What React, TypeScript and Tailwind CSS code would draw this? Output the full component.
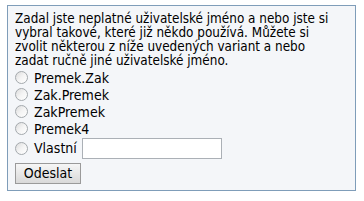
import React from "react";

const Radio = () => (
  <span className="inline-block w-[13px] h-[13px] rounded-full border border-[#a4a9ad] bg-gradient-to-br from-[#dcdcdc] via-[#f4f4f4] to-white shrink-0" />
);

const Row = ({ label }: { label: string }) => (
  <div className="flex items-center h-[17px]">
    <Radio />
    <span className="ml-[6px] text-[14px]">{label}</span>
  </div>
);

export default function App() {
  return (
    <div className="w-[364px] h-[201px] bg-white pt-[5px] pl-[7px]">
      <div
        className="w-[349px] h-[186px] border border-[#7f9db9] bg-[#f4f6f9] pt-[6px] pl-[7px] text-[13.4px] leading-[14px] text-black"
        style={{ fontFamily: '"DejaVu Sans Condensed", "DejaVu Sans", sans-serif' }}
      >
        <p>
          Zadal jste neplatné uživatelské jméno a nebo jste si
          <br />
          vybral takové, které již někdo používá. Můžete si
          <br />
          zvolit některou z níže uvedených variant a nebo
          <br />
          zadat ručně jiné uživatelské jméno.
        </p>
        <div className="mt-[1px]">
          <Row label="Premek.Zak" />
          <Row label="Zak.Premek" />
          <Row label="ZakPremek" />
          <Row label="Premek4" />
          <div className="flex items-center h-[22px]">
            <Radio />
            <span className="ml-[6px] text-[14px]">Vlastní</span>
            <input
              type="text"
              className="ml-[5px] w-[140px] h-[21px] border border-[#abb0b6] bg-white outline-none"
            />
          </div>
        </div>
        <button
          type="button"
          className="mt-[4px] w-[66px] h-[21px] border border-[#9a9a9a] bg-gradient-to-b from-[#f6f6f6] to-[#d9d9d9] text-[14px] leading-[19px] text-black"
          style={{ fontFamily: '"DejaVu Sans Condensed", "DejaVu Sans", sans-serif' }}
        >
          Odeslat
        </button>
      </div>
    </div>
  );
}
